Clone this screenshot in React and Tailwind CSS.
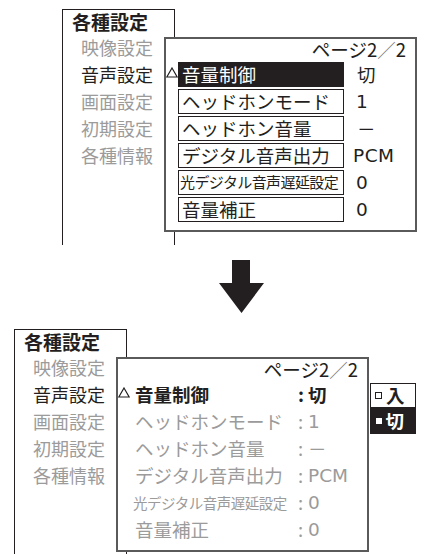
const rows = [
  { label: '音量制御', value: '切' },
  { label: 'ヘッドホンモード', value: '1' },
  { label: 'ヘッドホン音量', value: '－' },
  { label: 'デジタル音声出力', value: 'PCM' },
  { label: '光デジタル音声遅延設定', value: '0', small: true },
  { label: '音量補正', value: '0' },
];

const menu = [
  { label: '映像設定', active: false },
  { label: '音声設定', active: true },
  { label: '画面設定', active: false },
  { label: '初期設定', active: false },
  { label: '各種情報', active: false },
];

function Triangle() {
  return (
    <svg width="12" height="11" viewBox="0 0 12 11" className="mb-[5px]">
      <path d="M6 1 L11.2 10 L0.8 10 Z" fill="none" stroke="#231f20" strokeWidth="1.2" />
    </svg>
  );
}

// 英数字の値は幅の広い書体で
const latin = "font-['DejaVu_Sans','Noto_Sans_CJK_JP',sans-serif]";

function Diagram({ after }) {
  return (
    <div className="relative w-[355px] h-[236px]">
      {/* 左メニュー */}
      <div className="w-[113px] h-full border-l-[1.5px] border-r-[1.5px] border-t-[1.5px] border-[#231f20]">
        <div className="h-[23.5px] pl-[9px] text-[19px] leading-[24px] font-bold text-[#231f20]">各種設定</div>
        {menu.map((m) => (
          <div
            key={m.label}
            className={`h-[27px] pl-[18px] text-[18px] leading-[27px] ${m.active ? 'text-[#231f20]' : 'text-[#9b9b9b]'}`}
          >
            {m.label}
          </div>
        ))}
      </div>

      {/* サブパネル */}
      <div className="absolute left-[102px] top-[28px] w-[253px] h-[195px] border-2 border-[#5a5a5a] bg-white">
        <div className="h-[23px] flex justify-end pr-[9px] text-[18.5px] leading-[21px] text-[#231f20]">
          ページ2<span className="text-[#777]">／</span>2
        </div>
        <div className="flex flex-col gap-[2px]">
          {rows.map((r, i) => {
            const first = i === 0;
            if (!after) {
              return (
                <div key={r.label} className="h-[25px] flex items-center">
                  <div className="w-[12px] flex items-center">{first && <Triangle />}</div>
                  <div
                    className={`w-[166px] h-[25px] flex items-center border-[1.5px] border-[#231f20] whitespace-nowrap ${
                      first ? 'bg-[#231f20] text-white' : 'bg-white text-[#231f20]'
                    } ${r.small ? 'text-[15px] tracking-[-0.6px] pl-[1px]' : 'text-[18.5px] pl-[3px]'}`}
                  >
                    {r.label}
                  </div>
                  <div
                    className={`text-[18.5px] text-[#231f20] ${r.value === 'PCM' ? `${latin} ml-[9px] tracking-[0.5px]` : r.value === '0' || r.value === '1' ? `${latin} ml-[12px]` : 'ml-[13px]'}`}
                  >
                    {r.value}
                  </div>
                </div>
              );
            }
            const color = first ? 'text-[#231f20] font-bold' : 'text-[#9b9b9b]';
            return (
              <div key={r.label} className={`h-[25px] flex items-center ${color}`}>
                <div className="w-[12px] flex items-center">{first && <Triangle />}</div>
                <div
                  className={`w-[168px] whitespace-nowrap ${
                    r.small ? 'text-[14.5px] tracking-[-0.5px] pl-[3px]' : 'text-[18.5px] pl-[5px]'
                  }`}
                >
                  {r.label}
                </div>
                <div className="w-[10px] text-[18.5px]">:</div>
                <div className={`text-[18.5px] ${r.value === '切' || r.value === '－' ? '' : latin}`}>{r.value}</div>
              </div>
            );
          })}
        </div>
      </div>

      {/* 選択肢ポップアップ */}
      {after && (
        <div className="absolute left-[356px] top-[54px] w-[46px] flex flex-col text-[18.5px] font-bold">
          <div className="h-[25px] flex items-center gap-[4px] pl-[4px] border-[1.5px] border-[#231f20] bg-white text-[#231f20]">
            <span className="w-[7px] h-[7px] border border-[#231f20]" />
            入
          </div>
          <div className="h-[26px] flex items-center gap-[4px] pl-[5.5px] bg-[#231f20] text-white">
            <span className="w-[6px] h-[6px] bg-white" />
            切
          </div>
        </div>
      )}
    </div>
  );
}

export default function App() {
  return (
    <div className="w-[425px] h-[554px] overflow-hidden bg-white font-['Noto_Sans_CJK_JP','Noto_Sans',sans-serif]">
      <div className="pt-[9px] pl-[62px]">
        <Diagram after={false} />
      </div>
      <div className="mt-[15px] ml-[219px]">
        <svg width="45" height="53" viewBox="0 0 45 53">
          <path d="M13 0 H31 V23 H45 L22.5 53 L0 23 H13 Z" fill="#231f20" />
        </svg>
      </div>
      <div className="mt-[16px] ml-[14px]">
        <Diagram after />
      </div>
    </div>
  );
}
